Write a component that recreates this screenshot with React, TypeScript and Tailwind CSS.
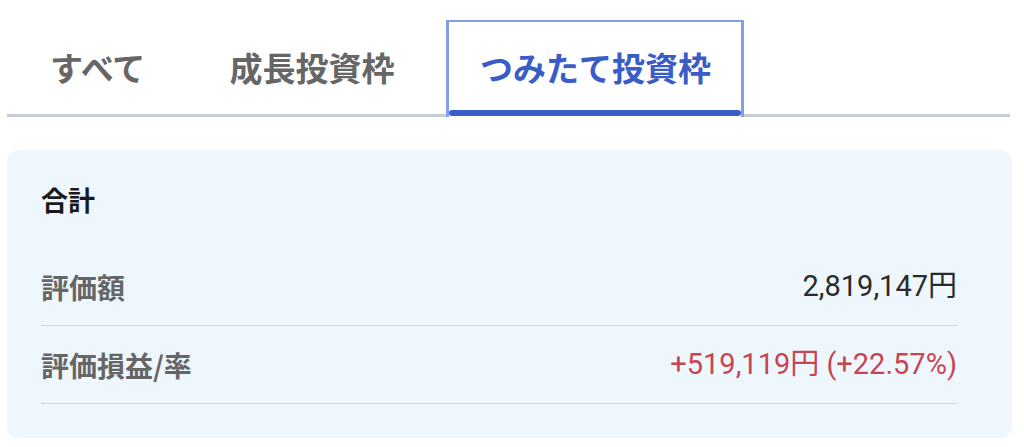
import React from 'react';

const jp = { fontFamily: '"Noto Sans CJK JP", "Noto Sans", sans-serif' };
const num = { fontFamily: 'Roboto, "Noto Sans CJK JP", sans-serif' };

const tabs = ['すべて', '成長投資枠', 'つみたて投資枠'];

export default function App() {
  const active = 2;

  return (
    <div className="w-[1024px] h-[447px] bg-white overflow-hidden" style={jp}>
      {/* TABS */}
      <div className="pt-[20px] pl-[7px]">
        <div className="w-[1003px] h-[97px] flex items-stretch gap-[20px] border-b-[3px] border-[#c9cdd7]">
          {tabs.map((t, i) =>
            i === active ? (
              <div
                key={t}
                className="-mb-[3px] w-[298px] flex flex-col border-t-2 border-x-[3px] border-[#7f9fe9] bg-white"
              >
                <div className="flex-1 flex items-center justify-center text-[33px] font-bold text-[#3a5cc8] pt-[4px]">
                  {t}
                </div>
                <div className="h-[6px] mb-[1px] rounded-full bg-[#3a5ec9]"></div>
              </div>
            ) : (
              <div
                key={t}
                className={`${i === 0 ? 'ml-[11px]' : ''} px-[32px] flex items-center text-[33px] font-bold text-[#666666] pt-[2px]`}
              >
                {t}
              </div>
            )
          )}
        </div>
      </div>

      {/* SUMMARY CARD */}
      <div className="mt-[33px] ml-[7px] w-[1005px] h-[288px] rounded-[12px] bg-[#eff7fe] pl-[34px] pr-[55px]">
        <div className="pt-[30px] h-[98px] text-[27px] font-bold text-[#1a1a1a] leading-[40px]">合計</div>
        <div className="flex items-center justify-between h-[78px] border-b border-[#d3d8df]">
          <span className="text-[28px] font-bold text-[#666666]">評価額</span>
          <span className="text-[29px] text-[#2a2a2a]" style={num}>
            2,819,147円
          </span>
        </div>
        <div className="flex items-center justify-between h-[78px] border-b border-[#d3d8df]">
          <span className="text-[28px] font-bold text-[#666666]">評価損益/率</span>
          <span className="text-[29px] text-[#c8444f]" style={num}>
            +519,119円 (+22.57%)
          </span>
        </div>
      </div>
    </div>
  );
}
